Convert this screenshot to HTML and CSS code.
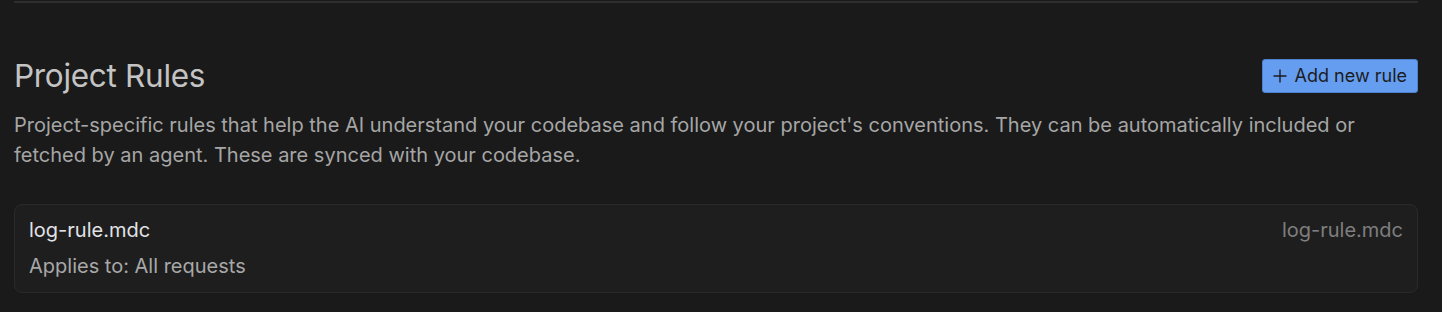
FILE: index.html
```html
<!DOCTYPE html>
<html lang="en">
<head>
  <meta charset="UTF-8" />
  <meta name="viewport" content="width=device-width, initial-scale=1.0"/>
  <title>Project Rules</title>
  <link rel="stylesheet" href="styles.css">
</head>
<body>
  <div class="page">
    <div class="divider"></div>

    <div class="header">
      <h2>Project Rules</h2>
      <button class="add-btn">
        <svg class="plus" width="14" height="14" viewBox="0 0 14 14"><path d="M7 0.5v13M0.5 7h13" stroke="currentColor" stroke-width="1.4" fill="none"/></svg>
        Add new rule
      </button>
    </div>
    <p class="desc">Project-specific rules that help the AI understand your codebase and follow your project's conventions. They can be automatically included or fetched by an agent. These are synced with your codebase.</p>

    <div class="rule">
      <div class="rule-main">
        <div class="rule-name">log-rule.mdc</div>
        <div class="rule-applies">Applies to: All requests</div>
      </div>
      <div class="rule-file">log-rule.mdc</div>
    </div>
  </div>
</body>
</html>
```

FILE: styles.css
```css
body { margin: 0; background: #1a1a1a; font-family: Inter, "Noto Sans", sans-serif; color: #c8c8c8; }
.page { padding: 0 24px 0 14px; }
.divider { height: 2px; background: #2e2e2e; margin-top: 1px; }
.header { display: flex; align-items: center; justify-content: space-between; margin-top: 53px; }
h2 { margin: 0; font-size: 31.5px; font-weight: 400; color: #c4c4c4; letter-spacing: -0.3px; }
.add-btn { background: #659ef0; color: #1c1c1e; border: 1px solid #4f82cc; border-radius: 3px; font-family: inherit; font-size: 18px; height: 34px; padding: 0 10px 0 10px; display: flex; align-items: center; gap: 8px; cursor: pointer; }
.plus { display: block; }
.desc { margin: 15px 0 0; font-size: 20px; line-height: 30px; color: #a6a6a6; max-width: 1380px; }
.rule { margin-top: 34px; display: flex; justify-content: space-between; align-items: flex-start; background: #1e1e1e; border: 1px solid #2a2a2a; border-radius: 8px; padding: 13px 14px 14px; }
.rule-name { font-size: 20px; color: #e2e2e6; line-height: 24px; }
.rule-applies { font-size: 20px; color: #a8a8a8; line-height: 24px; margin-top: 12px; }
.rule-file { font-size: 20px; color: #7e7e7e; line-height: 24px; }
```
